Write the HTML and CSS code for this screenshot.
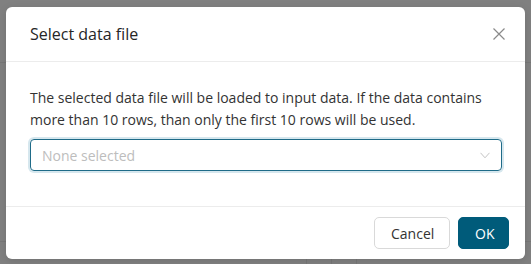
FILE: index.html
```html
<!DOCTYPE html>
<html>
<head>
<meta charset="utf-8">
<link rel="stylesheet" href="styles.css">
</head>
<body>
<div class="page">
  <div class="modal">
    <div class="modal-header">
      <div class="modal-title">Select data file</div>
      <button class="close" aria-label="Close">
        <svg width="12" height="12" viewBox="0 0 12 12"><path d="M0.5 0.5 L11.5 11.5 M11.5 0.5 L0.5 11.5" stroke="#8a8a8a" stroke-width="1.2" fill="none"/></svg>
      </button>
    </div>
    <div class="modal-body">
      <p class="desc">The selected data file will be loaded to input data. If the data contains more than 10 rows, than only the first 10 rows will be used.</p>
      <div class="select">
        <span class="placeholder">None selected</span>
        <svg class="chevron" width="10" height="7" viewBox="0 0 10 7"><path d="M0.5 0.8 L5 5.8 L9.5 0.8" stroke="#c4c4c4" stroke-width="1" fill="none"/></svg>
      </div>
    </div>
    <div class="modal-footer">
      <button class="btn btn-default">Cancel</button>
      <button class="btn btn-primary">OK</button>
    </div>
  </div>
</div>
</body>
</html>
```
FILE: styles.css
```css
* { box-sizing: border-box; }
html, body { margin: 0; padding: 0; }
body {
  width: 531px;
  height: 264px;
  overflow: hidden;
  font-family: "Open Sans", "Noto Sans", sans-serif;
  background-color: #808080;
  background-image:
    linear-gradient(#777777, #777777),
    linear-gradient(#777777, #777777),
    linear-gradient(#777777, #777777),
    linear-gradient(#777777, #777777),
    linear-gradient(#777777, #777777);
  background-repeat: no-repeat;
  background-size: 531px 1px, 531px 1px, 1px 23px, 1px 23px, 1px 23px;
  background-position: 0 62px, 0 241px, 306px 241px, 331px 241px, 356px 241px;
}
.page {
  padding: 7px 6px 0 6px;
}
.modal {
  width: 519px;
  height: 252px;
  background: #fff;
  border-radius: 6px;
  display: flex;
  flex-direction: column;
  box-shadow: 0 2px 8px rgba(0,0,0,0.12);
}
.modal-header {
  height: 55px;
  padding: 0 20px 0 24px;
  border-bottom: 1px solid #ececec;
  display: flex;
  align-items: center;
  justify-content: space-between;
}
.modal-title {
  font-size: 16px;
  color: #262626;
  line-height: 22px;
}
.close {
  border: 0;
  background: none;
  padding: 0;
  width: 12px;
  height: 12px;
  display: flex;
  cursor: pointer;
}
.modal-body {
  flex: 1;
  padding: 25px 23px 0 24px;
}
.desc {
  margin: 0;
  font-size: 14px;
  line-height: 22px;
  color: #333;
}
.select {
  margin-top: 8px;
  height: 32px;
  border: 1px solid #1f6b88;
  border-radius: 4px;
  box-shadow: 0 0 0 2px #d6e7ee;
  display: flex;
  align-items: center;
  justify-content: space-between;
  padding: 0 11px 0 11px;
}
.placeholder {
  font-size: 14px;
  color: #bdbdbd;
}
.chevron { display: block; }
.modal-footer {
  height: 53px;
  border-top: 1px solid #ececec;
  padding: 0 16px;
  display: flex;
  align-items: center;
  justify-content: flex-end;
  gap: 8px;
}
.btn {
  height: 32px;
  border-radius: 5px;
  font-family: "Open Sans", "Noto Sans", sans-serif;
  font-size: 14px;
  padding: 0 16px;
  cursor: pointer;
}
.btn-default {
  width: 76px;
  background: #fff;
  border: 1px solid #d9d9d9;
  color: #333;
}
.btn-primary {
  width: 51px;
  background: #005b7a;
  border: 1px solid #005b7a;
  color: #fff;
}
```
